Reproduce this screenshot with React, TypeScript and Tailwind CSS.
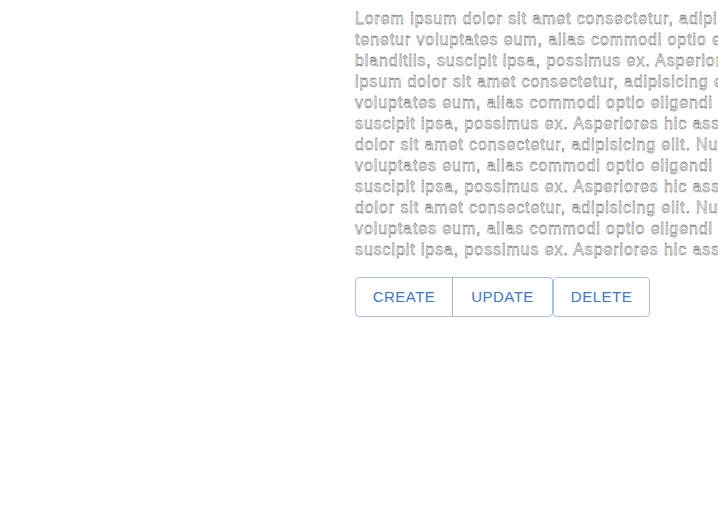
import React from "react";

const lines = [
  "Lorem ipsum dolor sit amet consectetur, adipisicing elit. Nulla",
  "tenetur voluptates eum, alias commodi optio eligendi",
  "blanditiis, suscipit ipsa, possimus ex. Asperiores hic assumenda. Lorem",
  "ipsum dolor sit amet consectetur, adipisicing elit. Nulla tenetur",
  "voluptates eum, alias commodi optio eligendi blanditiis,",
  "suscipit ipsa, possimus ex. Asperiores hic assumenda. Lorem ipsum",
  "dolor sit amet consectetur, adipisicing elit. Nulla tenetur",
  "voluptates eum, alias commodi optio eligendi blanditiis,",
  "suscipit ipsa, possimus ex. Asperiores hic assumenda. Lorem ipsum",
  "dolor sit amet consectetur, adipisicing elit. Nulla tenetur",
  "voluptates eum, alias commodi optio eligendi blanditiis,",
  "suscipit ipsa, possimus ex. Asperiores hic assumenda.",
];

export default function App() {
  return (
    <div className="w-[718px] h-[508px] overflow-hidden bg-white flex" style={{ fontFamily: '"Liberation Sans", Arial, sans-serif' }}>
      <div className="w-[355px] shrink-0" />
      <div className="flex flex-col items-start pt-[8px] min-w-0">
        <div className="text-[16px] leading-[21px] tracking-[0.9px] text-white [-webkit-text-stroke:0.3px_#000] whitespace-nowrap">
          {lines.map((l, i) => (
            <div key={i}>{l}</div>
          ))}
        </div>
        <div className="mt-[17px] flex">
          <div className="flex rounded-[4px] border border-[#a9c0df]">
            <button className="w-[97px] h-[38px] text-[15px] tracking-[0.5px] text-[#3d78c4] border-r border-[#b0b0b0]">CREATE</button>
            <button className="w-[99px] h-[38px] text-[15px] tracking-[0.5px] text-[#3d78c4]">UPDATE</button>
          </div>
          <button className="w-[97px] h-[40px] rounded-[4px] border border-[#a9c0df] text-[15px] tracking-[0.5px] text-[#3d78c4]">DELETE</button>
        </div>
      </div>
    </div>
  );
}
